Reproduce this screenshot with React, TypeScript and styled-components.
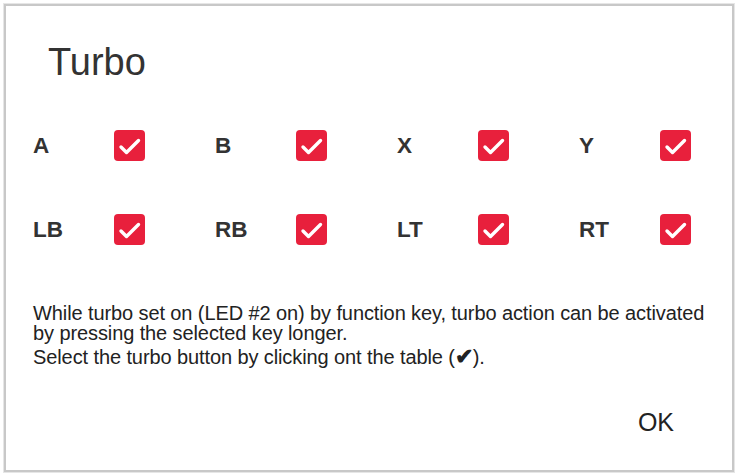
import React, { useState } from "react";
import styled, { createGlobalStyle } from "styled-components";

const Global = createGlobalStyle`
  html, body { margin: 0; padding: 0; background: #ffffff; }
  body { font-family: "Liberation Sans", Arial, sans-serif; }
`;

const Dialog = styled.div`
  box-sizing: border-box;
  margin: 4px;
  width: 730px;
  height: 468px;
  border: 2px solid #c8c8c8;
  box-shadow: 0 0 0 1px #e6e6e6;
  background: #ffffff;
  padding: 37px 0 0 27px;
  display: flex;
  flex-direction: column;
`;

const Title = styled.h1`
  margin: 0 0 0 15px;
  font-size: 38px;
  line-height: 38px;
  font-weight: 400;
  color: #333333;
`;

const KeyGrid = styled.div`
  margin-top: 49px;
  display: grid;
  grid-template-columns: repeat(4, 182px);
  row-gap: 53px;
`;

const KeyCell = styled.div`
  display: flex;
  align-items: center;
  height: 31px;
`;

const KeyLabel = styled.span`
  width: 81px;
  font-size: 22.5px;
  font-weight: 700;
  color: #333333;
  line-height: 31px;
`;

const Box = styled.button<{ $on: boolean }>`
  width: 31px;
  height: 31px;
  padding: 0;
  border: ${(p) => (p.$on ? "none" : "2px solid #b5b5b5")};
  border-radius: 4px;
  background: ${(p) => (p.$on ? "#e8203c" : "#ffffff")};
  display: flex;
  align-items: center;
  justify-content: center;
  cursor: pointer;
`;

const Info = styled.div`
  margin-top: 58px;
  font-size: 20px;
  line-height: 20px;
  letter-spacing: -0.1px;
  color: #222222;
`;

const Para = styled.p<{ $gap?: number }>`
  margin: ${(p) => p.$gap ?? 0}px 0 0 0;
  white-space: nowrap;
`;

const Tick = styled.span`
  font-size: 22px;
  font-weight: 700;
`;

const Footer = styled.div`
  margin-top: 43px;
  display: flex;
  justify-content: flex-end;
  padding-right: 58px;
`;

const OkButton = styled.button`
  border: none;
  background: transparent;
  padding: 0;
  font-family: "Liberation Sans", Arial, sans-serif;
  font-size: 25px;
  line-height: 25px;
  color: #222222;
  cursor: pointer;
`;

const keys = ["A", "B", "X", "Y", "LB", "RB", "LT", "RT"];

export default function App() {
  const [state, setState] = useState<Record<string, boolean>>(
    Object.fromEntries(keys.map((k) => [k, true]))
  );
  return (
    <>
      <Global />
      <Dialog>
        <Title>Turbo</Title>
        <KeyGrid>
          {keys.map((k) => (
            <KeyCell key={k}>
              <KeyLabel>{k}</KeyLabel>
              <Box
                $on={state[k]}
                onClick={() => setState((s) => ({ ...s, [k]: !s[k] }))}
              >
                {state[k] && (
                  <svg width="31" height="31" viewBox="0 0 31 31">
                    <path
                      d="M7 17 L12.5 22.5 L24.5 10.5"
                      fill="none"
                      stroke="#ffffff"
                      strokeWidth="3.4"
                      strokeLinecap="round"
                      strokeLinejoin="round"
                    />
                  </svg>
                )}
              </Box>
            </KeyCell>
          ))}
        </KeyGrid>
        <Info>
          <Para>
            While turbo set on (LED #2 on) by function key, turbo action can be activated
            <br />
            by pressing the selected key longer.
          </Para>
          <Para $gap={4}>
            Select the turbo button by clicking ont the table (<Tick>✔</Tick>).
          </Para>
        </Info>
        <Footer>
          <OkButton>OK</OkButton>
        </Footer>
      </Dialog>
    </>
  );
}
